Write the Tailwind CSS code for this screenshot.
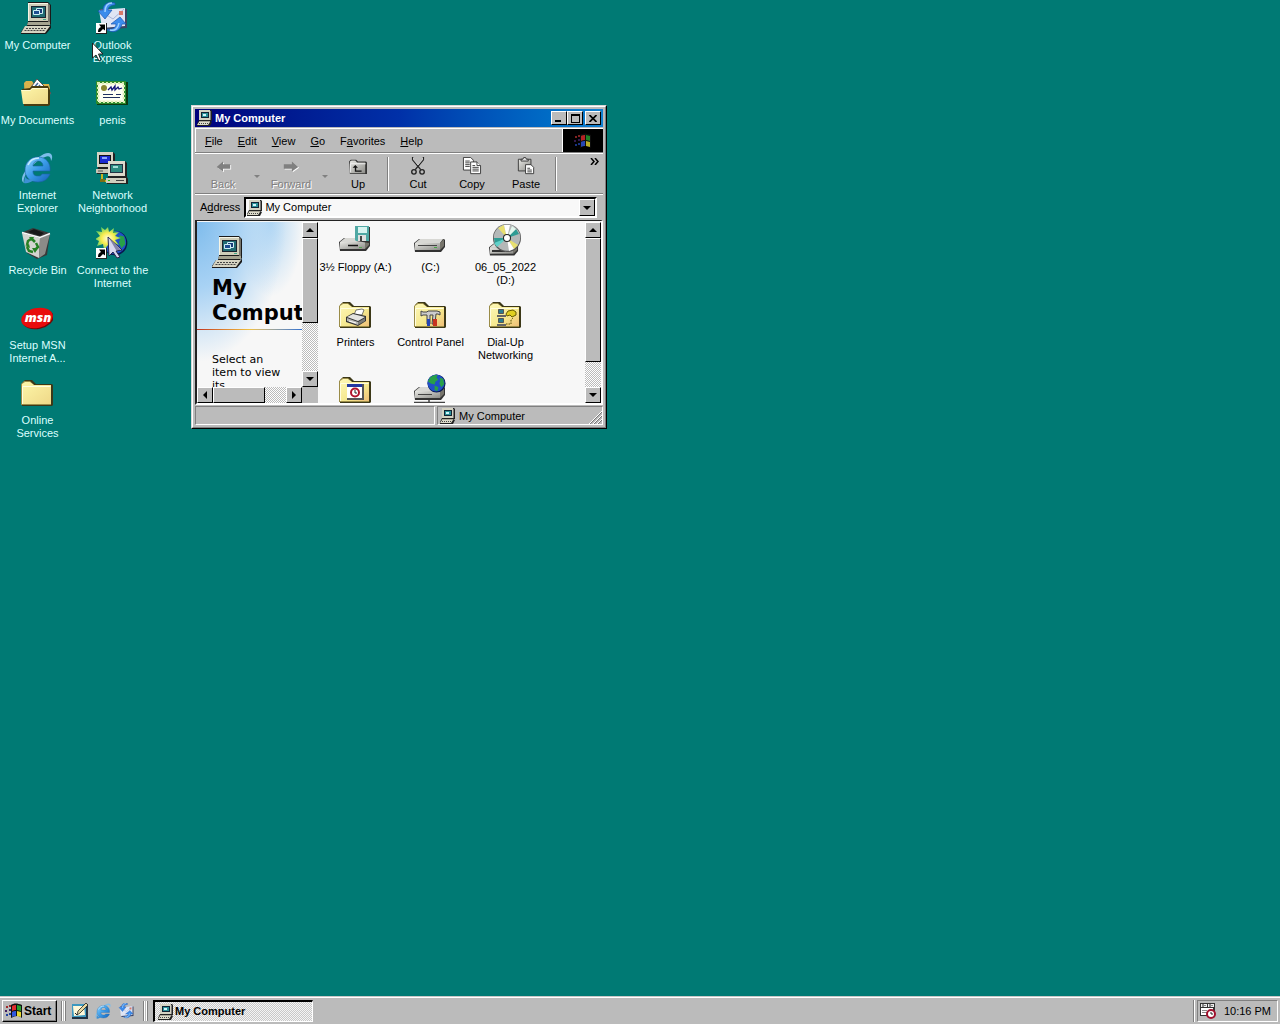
<!DOCTYPE html>
<html lang="en">
<head>
<meta charset="utf-8">
<title>Desktop</title>
<script src="https://cdn.jsdelivr.net/npm/@tailwindcss/browser@4"></script>
</head>
<body class="font-['Liberation_Sans',Arial,sans-serif] text-[11px] leading-[13px] text-black">

<!-- Shared icon symbols -->
<svg class="absolute size-0" aria-hidden="true">
  <defs>
    <linearGradient id="silver" x1="0" y1="0" x2="1" y2="1"><stop offset="0" stop-color="#e8e8e4"/><stop offset="1" stop-color="#8c8c88"/></linearGradient>
    <linearGradient id="yellow" x1="0" y1="0" x2="1" y2="1"><stop offset="0" stop-color="#fdf8b8"/><stop offset=".6" stop-color="#f5e78c"/><stop offset="1" stop-color="#efbf78"/></linearGradient>
    <linearGradient id="plain-yellow" x1="0" y1="0" x2="1" y2="1"><stop offset="0" stop-color="#fdf6a8"/><stop offset="1" stop-color="#efd888"/></linearGradient>
    <linearGradient id="ieblue" x1="0" y1="0" x2="1" y2="1"><stop offset="0" stop-color="#8fd4ff"/><stop offset=".5" stop-color="#3a9be8"/><stop offset="1" stop-color="#1560b8"/></linearGradient>
    <radialGradient id="burst"><stop offset="0" stop-color="#fffde0"/><stop offset=".5" stop-color="#f8ec50"/><stop offset="1" stop-color="#6cd060"/></radialGradient>

    <symbol id="computer" viewBox="0 0 32 32">
      <path d="M7 0h20l3 3v19l-2 2H6l1-4z" fill="#1a1a1a"/>
      <path d="M27 1l2 2v17l-2 1z" fill="#77756c"/>
      <path d="M7 1h20v18H7z" fill="#cfcdb9"/>
      <path d="M7 1h20v1H8v17H7z" fill="#f6f5e6"/>
      <path d="M10 4h15v12H10z" fill="#1c2430"/>
      <path d="M11 5h13v10H11z" fill="#1f6a72"/>
      <path d="M15.500 6.500h6v5h-6z" fill="#183c78" stroke="#cfeef6"/>
      <path d="M12.500 8.500h6v4h-6z" fill="#1c4d90" stroke="#cfeef6"/>
      <path d="M22 17h3v1h-3z" fill="#4a8"/>
      <path d="M7 20h22v3H6z" fill="#a5a390"/>
      <path d="M4 24h25l1-2v4l-5 6H0v-2z" fill="#1a1a1a"/>
      <path d="M4 24h25l-5 7H0z" fill="#d6d4c2"/>
      <path d="M5 26.500h20M3.500 28.500h20" stroke="#444" stroke-width="1" stroke-dasharray="2 1"/>
    </symbol>

    <symbol id="computer-sm" viewBox="0 0 16 16">
      <path d="M2 0h12l1 1v10h-2l2 1-2 4H0v-2l2-4z" fill="#222"/>
      <path d="M2 0h11v10H2z" fill="#d4d2c2"/><path d="M13 1h1v9h-1z" fill="#777"/>
      <path d="M4 2h8v6H4z" fill="#123"/><path d="M5 3h6v4H5z" fill="#2a9098"/><path d="M6 4h3v2H6z" fill="#d0f4fa"/>
      <path d="M2 11h11v1H2z" fill="#a8a698"/><path d="M2 12h11l-2 3H0z" fill="#dcdaca"/>
      <path d="M2 13.500h9" stroke="#444" stroke-dasharray="1 1"/>
    </symbol>

    <symbol id="folder-back" viewBox="0 0 32 32">
      <path d="M1 6l3-3h7l4 4h16l1 1v20l-1 1H1z" fill="#3c3818"/>
      <path d="M0 28V7l3-3h6l4 4h17v20z" fill="#9a8c48"/>
    </symbol>
    <symbol id="folder" viewBox="0 0 32 32">
      <use href="#folder-back"/>
      <path d="M1 27V7l3-2h5l4 3h17v19z" fill="url(#yellow)"/>
      <path d="M1.500 27V9.500h28" fill="none" stroke="#fffde0"/>
    </symbol>
    <symbol id="folder-plain" viewBox="0 0 32 32">
      <use href="#folder-back"/>
      <path d="M1 27V7l3-2h5l4 3h17v19z" fill="url(#plain-yellow)"/>
      <path d="M1.500 27V9.500h28" fill="none" stroke="#fffde0"/>
    </symbol>

    <symbol id="folder-docs" viewBox="0 0 32 32">
      <path d="M3 6l2-2h6l2 3h15l1 4v16H4z" fill="#d9b24c"/>
      <path d="M8 13L16 2l14 14-5 6z" fill="#fff" stroke="#555"/>
      <path d="M12 12l5-6M15 13l4-5M18 14l3-4M21 15l2-3" stroke="#46689c" stroke-width="1.500"/>
      <path d="M1 12l8-1 2-2h16l2 4v15l-2 1H3z" fill="#4a3c10"/>
      <path d="M0 13h9l2-2h16v16H2z" fill="url(#plain-yellow)"/>
      <path d="M.500 13.500h9l2-2h15" fill="none" stroke="#fffbd0"/>
    </symbol>

    <symbol id="ie" viewBox="0 0 32 32">
      <path d="M3 31c-4-2-2-9 5-17S26-2 30 2c2 2 1 5 0 7 0-4-2-6-6-4C18 7 10 14 6 20c-3 5-4 9-3 11z" fill="#7cbdea"/>
      <path fill-rule="evenodd" d="M17 5C9 5 4 11 4 18s5 12 13 12c6 0 10-3 12-8h-8c-1 2-2 2-4 2-4 0-5-2-5-5h17C30 11 25 5 17 5zM12 14c0-3 2-5 5-5s5 2 5 5z" fill="url(#ieblue)" stroke="#1c62a8" stroke-width=".600"/>
      <path d="M7 13c2-5 6-7 11-7" fill="none" stroke="#c6eaff" stroke-width="1.500"/>
      <path d="M3 31c3 1 7-1 10-3l-3-1c-3 1-5 0-6-3z" fill="#3d90d4"/>
    </symbol>

    <symbol id="bin" viewBox="0 0 32 32">
      <path d="M2 5l10-4 17 5-3 22-10 4-10-6z" fill="#383838"/>
      <path d="M7 5l6-3 10 4-4 3z" fill="#181818"/>
      <path d="M1 6l18 5-1 20L5 25z" fill="#d4d4d0"/>
      <path d="M19 11l10-4-5 20-6 4z" fill="#8b8b88"/>
      <path d="M1 5.500l18 5 10-4" fill="none" stroke="#f8f8f8" stroke-width="1.500"/>
      <path d="M6 18l1-4 3-2M10 11l4 4M15 16l2 4-3 3M6 20l2 4 4 1" fill="none" stroke="#268024" stroke-width="2.500"/>
      <path d="M8 10l5 0-2 4zM17 21l-6 0 3 5zM4 19l4-2 1 4z" fill="#268024"/>
    </symbol>

    <symbol id="shortcut" viewBox="0 0 11 11">
      <path d="M0 0h11v11H0z" fill="#222"/><path d="M0 0h10v10H0z" fill="#fff"/>
      <path d="M3 1.500h6v6L7 6 4 9H2c0-3 1-4 3-5z" fill="#000"/>
    </symbol>

    <symbol id="outlook" viewBox="0 0 32 32">
      <path d="M4 7h27v19l-24 2z" fill="#3c4464"/>
      <path d="M3 8l26-2v18L6 26z" fill="#dfe5f4"/>
      <path d="M4 9l13 8L28 7" fill="none" stroke="#a7b4d8"/>
      <path d="M23 9h4v4h-4z" fill="#d87868"/>
      <path d="M19 1C12-1 7 2 7 8L2 9l7 8 7-9-4 0c0-3 3-5 7-5z" fill="#3c8cec" stroke="#1d58b0" stroke-width=".700"/>
      <path d="M10 27c6 5 14 3 16-5h4L24 15l-9 7h5c0 4-4 6-10 5z" fill="#3c8cec" stroke="#1d58b0" stroke-width=".700"/>
      <path d="M16 1c-4 0-7 3-7 9M14 28c5 1 8-1 9-7" fill="none" stroke="#9cd0ff" stroke-width="1.500"/>
    </symbol>

    <symbol id="certificate" viewBox="0 0 32 32">
      <path d="M1 5h31v23H1z" fill="#0a3a10"/>
      <path d="M0 4h30v23H0z" fill="#2f8b2c"/>
      <path d="M2 6h26v19H2z" fill="#f9f9df" stroke="#d4ecb0" stroke-width="2" stroke-dasharray="2 2"/>
      <path d="M4 8h22v15H4z" fill="#fffff4"/>
      <circle cx="8" cy="11" r="3" fill="#8b8730"/>
      <path d="M12 13l3-3 1 3 3-4 0 4 3-3 1 2 3-1" fill="none" stroke="#141478" stroke-width="1.300"/>
      <path d="M7 17.500h10M7 20.500h17M20 17.500h5" stroke="#203060"/>
    </symbol>

    <symbol id="network" viewBox="0 0 32 32">
      <path d="M1 0h16l2 2v15l1 2v3H1v-4l1-2z" fill="#222"/>
      <path d="M1 0h16v15H1z" fill="#d4d2c4"/><path d="M3 3h12v9H3z" fill="#111"/><path d="M4 4h10v7H4z" fill="#1a2ad0"/><path d="M6 5h5v2H6z" fill="#8ba4ff"/>
      <path d="M0 17h18v4H0z" fill="#c8c6b6"/><path d="M2 19h5" stroke="#555"/>
      <path d="M6 22v7h8" fill="none" stroke="#c9b220" stroke-width="2"/><path d="M4 27h5v3H4z" fill="#7b7016"/>
      <path d="M12 9h17l2 2v14l1 2v5H11v-5l1-2z" fill="#222"/>
      <path d="M12 9h17v15H12z" fill="#dcdacc"/><path d="M14 12h13v9H14z" fill="#234"/><path d="M15 13h11v7H15z" fill="#2d8a80"/><path d="M17 14h5v2h-5z" fill="#a4ded8"/>
      <path d="M10 26h20v5H10z" fill="#d0cebe"/><path d="M20 28.500h8" stroke="#444"/><path d="M12 28h2v1h-2z" fill="#2b2"/>
    </symbol>

    <symbol id="globe" viewBox="0 0 20 20">
      <circle cx="10" cy="10" r="9.500" fill="#081850"/><circle cx="9.500" cy="9.500" r="9" fill="#2050c8"/>
      <path d="M3 4c3-3 6-3 8-3l-1 3 2 2-3 2-1 3-4-1-3-2zM13 4l4 1 1 6-3 3-2-4 1-3zM8 12l4 2-1 4-3-1z" fill="#28a048"/>
    </symbol>

    <symbol id="connect" viewBox="0 0 32 32">
      <svg x="6" y="1" width="26" height="30"><use href="#globe"/></svg>
      <path d="M12 0l1 5 5-4-1 5 6-1-4 4 6 2-6 2 4 5-6-2-1 6-4-4-4 5-1-6-6 2 2-5-4-2 5-3-4-5 6 1-1-5 4 3z" fill="url(#burst)"/>
      <path d="M12 10l14 13-6 1 4 6-3 1-4-6-4 4z" fill="#d7d7ee" stroke="#26264c"/>
      <path d="M13 11l12 12-5 0z" fill="#8484ac"/>
    </symbol>

    <symbol id="msn" viewBox="0 0 32 32">
      <ellipse cx="17" cy="17" rx="16" ry="10" fill="#700808" transform="rotate(-12 17 17)"/>
      <ellipse cx="16" cy="16" rx="16" ry="10" fill="#e80c0c" transform="rotate(-12 16 16)"/>
      <text x="17" y="20" text-anchor="middle" font-family="Open Sans, sans-serif" font-size="13" font-weight="800" font-style="italic" fill="#fff">msn</text>
    </symbol>

    <symbol id="drive" viewBox="0 0 32 14">
      <path d="M0 5l5-4h25l1 1v7l-4 5H1z" fill="#333"/>
      <path d="M1 5l5-4h23l-3 4z" fill="#d8d8d4"/><path d="M26 5l4-4v7l-4 4z" fill="#77756c"/>
      <path d="M1 5h25v7H1z" fill="url(#silver)"/>
    </symbol>

    <symbol id="floppy-drive" viewBox="0 0 32 32">
      <svg x="0" y="13" width="32" height="14"><use href="#drive"/></svg>
      <path d="M9 21.500h10" stroke="#111" stroke-width="1.500"/><path d="M20 23h3v1h-3z" fill="#5a5"/>
      <path d="M17 3h14v16h-1l-13-2z" fill="#333"/><path d="M16 2h14v15H17l-1-1z" fill="#50a8a4"/><path d="M19 3h9v6h-9z" fill="#d8f4f0"/><path d="M19 11h8v6h-8z" fill="#e0e0e0"/><path d="M21 12h2v5h-2z" fill="#444"/>
    </symbol>
    <symbol id="hard-drive" viewBox="0 0 32 32">
      <svg x="0" y="14" width="32" height="14"><use href="#drive"/></svg>
      <path d="M4 21.500h19" stroke="#444"/><path d="M20 23.500h3" stroke="#4a4"/>
    </symbol>
    <symbol id="cd-drive" viewBox="0 0 32 32">
      <svg x="0" y="18" width="30" height="14"><use href="#drive"/></svg>
      <path d="M3 26h13v2H3z" fill="#333"/>
      <circle cx="18" cy="14" r="14" fill="#555"/><circle cx="18" cy="13.500" r="13.200" fill="#b4b8b8"/>
      <path d="M18 14L9 4l6-3zM18 14l7 11 4-4z" fill="#e8e070"/><path d="M18 14L15 1h6zM18 14l2 13 5-2z" fill="#fff"/>
      <path d="M18 14l9-9 3 5zM18 14L6 20l-1-6z" fill="#2e9c94"/><path d="M18 14L23 2l4 3z" fill="#e4f8ee"/><path d="M18 14L8 23l-3-4z" fill="#60d0c8"/>
      <circle cx="18" cy="14" r="4" fill="#222"/><circle cx="18" cy="14" r="3" fill="#fff"/>
    </symbol>
    <symbol id="printers" viewBox="0 0 32 32">
      <use href="#folder"/>
      <path d="M15 16l2-5 6-1 2 1-2 5z" fill="#fff" stroke="#555" stroke-width=".800"/>
      <path d="M7 18l7-4 13 3v5l-8 5-12-4z" fill="#333"/><path d="M8 18l6-3 12 3-7 4z" fill="#e4e4e0"/><path d="M8 19l11 4v3L8 22z" fill="#b8b8b4"/><path d="M19 23l7-4v3l-7 4z" fill="#7c7c78"/><path d="M10 22l7 2" stroke="#fff"/>
    </symbol>
    <symbol id="control-panel" viewBox="0 0 32 32">
      <use href="#folder"/>
      <path d="M7 12l2 1h4l1-1h9l3 1v3l-2-1h-2l-1 10h-3l1-9h-3v9h-3v-9H9l-2 1z" fill="#ccc" stroke="#444"/>
      <path d="M13 20h3v7h-3z" fill="#2444b4"/><path d="M19 20h4v7h-4z" fill="#c83420"/>
    </symbol>
    <symbol id="dialup" viewBox="0 0 32 32">
      <use href="#folder"/>
      <path d="M9.500 10.500h5v4h-5zM9.500 19.500h5v4h-5z" fill="#2a7c90" stroke="#555"/><path d="M8 16h9v2H8zM8 25h9v2H8z" fill="#666"/>
      <path d="M17 15l2-3 5-1 3 2v3l-4 2-2-2-3 1z" fill="#e0d020" stroke="#665c00"/><path d="M17 25h5v-4l2-2" fill="none" stroke="#554e00" stroke-dasharray="1.500 1"/>
    </symbol>
    <symbol id="scheduled" viewBox="0 0 32 32">
      <use href="#folder"/>
      <path d="M8 10h17v16H8z" fill="#555"/><path d="M8 10h15v14H8z" fill="#fff"/><path d="M8 10h15v3H8z" fill="#2338a0"/>
      <circle cx="16" cy="18.500" r="4" fill="#fff" stroke="#b0142c" stroke-width="2"/><path d="M16 16v3h2" stroke="#222" fill="none"/>
    </symbol>
    <symbol id="web-folders" viewBox="0 0 32 32">
      <svg x="0" y="12" width="32" height="14"><use href="#drive"/></svg>
      <path d="M4 20.500h14" stroke="#444"/><path d="M0 28.500h31M15 26v6" stroke="#444" stroke-width="1.500"/>
      <svg x="13" y="0" width="19" height="19"><use href="#globe"/></svg>
    </symbol>

    <symbol id="flag" viewBox="0 0 18 16">
      <path d="M1 3h2v2H1zM4 2h2v2H4z" fill="#a02c2c"/><path d="M0 7h2v2H0zM4 6h2v2H4z" fill="#402060"/><path d="M1 11h2v2H1zM4 10h2v2H4z" fill="#2040a0"/>
      <path d="M6 2c3-2 6-2 11 0v13c-4-3-7-2-11 0z" fill="#111"/>
      <path d="M7 3c1-1 3-1 4-1v5c-1 0-3 0-4 1z" fill="#e02c2c"/><path d="M12 2l4 1v5l-4-1z" fill="#28a030"/>
      <path d="M7 9c1-1 3-1 4-1v5c-1 0-3 0-4 1z" fill="#3058e0"/><path d="M12 8l4 1v5l-4-1z" fill="#e8d830"/>
    </symbol>

    <symbol id="up" viewBox="0 0 8 4"><path d="M4 0l4 4H0z"/></symbol>
    <symbol id="down" viewBox="0 0 8 4"><path d="M0 0h8L4 4z"/></symbol>
    <symbol id="left" viewBox="0 0 4 8"><path d="M4 0v8L0 4z"/></symbol>
    <symbol id="right" viewBox="0 0 4 8"><path d="M0 0l4 4-4 4z"/></symbol>
  </defs>
</svg>

<div class="relative flex h-screen w-full flex-col overflow-hidden bg-[#007a74]">

  <!-- Desktop icons -->
  <main class="grow pt-[2px]">
    <ul class="grid w-max auto-cols-[75px] grid-flow-col grid-rows-[repeat(6,75px)] text-center text-[#dcffff]">
      <li><a href="#" class="flex flex-col items-center gap-[5px]"><svg class="mr-px size-8"><use href="#computer"/></svg>My Computer</a></li>
      <li><a href="#" class="flex flex-col items-center gap-[5px] whitespace-nowrap"><svg class="mr-px size-8"><use href="#folder-docs"/></svg>My Documents</a></li>
      <li><a href="#" class="flex flex-col items-center gap-[5px]"><svg class="mr-px size-8"><use href="#ie"/></svg><span>Internet<br>Explorer</span></a></li>
      <li><a href="#" class="flex flex-col items-center gap-[5px]"><svg class="mr-px size-8"><use href="#bin"/></svg>Recycle Bin</a></li>
      <li><a href="#" class="flex flex-col items-center gap-[5px]"><svg class="mr-px size-8"><use href="#msn"/></svg><span>Setup MSN<br>Internet A...</span></a></li>
      <li><a href="#" class="flex flex-col items-center gap-[5px]"><svg class="mr-px size-8"><use href="#folder-plain"/></svg><span>Online<br>Services</span></a></li>
      <li><a href="#" class="flex flex-col items-center gap-[5px]"><svg class="mr-px size-8"><use href="#outlook"/><use href="#shortcut" x="0" y="21" width="11" height="11"/></svg><span>Outlook<br>Express</span></a></li>
      <li><a href="#" class="flex flex-col items-center gap-[5px]"><svg class="mr-px size-8"><use href="#certificate"/></svg>penis</a></li>
      <li><a href="#" class="flex flex-col items-center gap-[5px]"><svg class="mr-px size-8"><use href="#network"/></svg><span>Network<br>Neighborhood</span></a></li>
      <li><a href="#" class="flex flex-col items-center gap-[5px]"><svg class="mr-px size-8"><use href="#connect"/><use href="#shortcut" x="0" y="21" width="11" height="11"/></svg><span class="whitespace-nowrap">Connect to the<br>Internet</span></a></li>
    </ul>
  </main>

  <!-- My Computer window -->
  <section class="absolute left-[191px] top-[105px] flex h-[324px] w-[416px] flex-col border border-[#d8d8d8] border-r-black border-b-black bg-[#bbbbbb]">
    <div class="flex min-h-0 grow flex-col border border-white border-r-[#808080] border-b-[#808080] p-[2px]">
      <header class="flex h-[18px] shrink-0 items-center gap-[2px] bg-linear-to-r from-[#00007c] via-[#0030a8] to-[#1080d0] px-[2px] text-white">
        <svg class="size-4"><use href="#computer-sm"/></svg>
        <h1 class="grow font-bold">My Computer</h1>
        <div class="flex">
          <button aria-label="Minimize" class="flex h-[14px] w-4 items-end border border-white border-r-black border-b-black bg-[#bbbbbb] pb-[2px] pl-[3px]"><span class="h-[2px] w-[6px] bg-black"></span></button>
          <button aria-label="Maximize" class="mr-[2px] flex h-[14px] w-4 items-center justify-center border border-white border-r-black border-b-black bg-[#bbbbbb]"><span class="h-[9px] w-[9px] border border-t-2 border-black"></span></button>
          <button aria-label="Close" class="flex h-[14px] w-4 items-center justify-center border border-white border-r-black border-b-black bg-[#bbbbbb]"><svg class="h-[7px] w-2" viewBox="0 0 8 7"><path d="M.500 0l7 7M7.500 0l-7 7" stroke="#000" stroke-width="1.700"/></svg></button>
        </div>
      </header>

      <div class="mt-px flex h-[25px] shrink-0 border-t border-b border-t-white border-b-[#808080]">
        <nav class="flex grow items-center gap-[15px] border-r border-l border-white pt-px pl-[9px]">
          <a href="#"><u>F</u>ile</a><a href="#"><u>E</u>dit</a><a href="#"><u>V</u>iew</a><a href="#"><u>G</u>o</a><a href="#">F<u>a</u>vorites</a><a href="#"><u>H</u>elp</a>
        </nav>
        <div class="flex w-10 items-center justify-center bg-black"><svg class="h-4 w-[18px] opacity-80"><use href="#flag"/></svg></div>
      </div>

      <div class="flex h-[41px] shrink-0 border-t border-b border-white border-b-[#808080] pt-[3px] pb-[2px] pl-px">
        <button class="flex w-[54px] flex-col items-center gap-[3px] text-[#808080] [text-shadow:1px_1px_#fff]"><svg class="h-5 w-5" viewBox="0 0 20 20"><path d="M4 12l7-6v3h8v5h-8v3z" fill="#fff"/><path d="M3 11l7-6v3h8v5h-8v3z" fill="#808080"/></svg>Back</button>
        <button aria-label="Back history" class="flex w-[14px] items-center justify-center pt-1"><svg class="h-[3px] w-[6px] fill-[#808080]"><use href="#down"/></svg></button>
        <button class="flex w-[54px] flex-col items-center gap-[3px] text-[#808080] [text-shadow:1px_1px_#fff]"><svg class="h-5 w-5" viewBox="0 0 20 20"><path d="M19 12l-7-6v3H3v5h9v3z" fill="#fff"/><path d="M18 11l-7-6v3H2v5h9v3z" fill="#808080"/></svg>Forward</button>
        <button aria-label="Forward history" class="flex w-[13px] items-center justify-center pt-1"><svg class="h-[3px] w-[6px] fill-[#808080]"><use href="#down"/></svg></button>
        <button class="flex w-[54px] flex-col items-center gap-[3px]"><svg class="h-5 w-5" viewBox="0 0 20 20"><path d="M0 5l2-2h6l2 2h9l1 1v13H1z" fill="#333"/><path d="M1 5l2-1h4l2 2h9v12H1z" fill="url(#silver)"/><path d="M1.500 17V7.500h17" fill="none" stroke="#f4f4f4"/><path d="M7 9l3 3H8v3h6v1.500H6.500V12H4z" fill="#111"/></svg>Up</button>
        <span class="mx-[2px] w-[2px] border-l border-l-[#808080] bg-white"></span>
        <button class="flex w-[54px] flex-col items-center gap-[3px]"><svg class="h-5 w-5" viewBox="0 0 20 20" fill="none" stroke="#222"><path d="M4 0v3l9 11M16 0v3L7 14" stroke-width="1.500"/><path d="M5 1v2l5 6M15 1v2l-5 6" stroke="#eee" stroke-width=".700"/><circle cx="5.500" cy="16.500" r="2.500" stroke-width="1.500"/><circle cx="14.500" cy="16.500" r="2.500" stroke-width="1.500"/></svg>Cut</button>
        <button class="flex w-[54px] flex-col items-center gap-[3px]"><svg class="h-5 w-5" viewBox="0 0 20 20" fill="#fff" stroke="#333"><path d="M.500.500h8l3 3v11H.500z"/><path d="M2.500 4.500h5M2.500 6.500h5M2.500 8.500h5M2.500 10.500h5"/><path d="M8.500 5.500h7l4 4v9h-11z"/><path d="M15.500 5.500v4h4M10.500 9.500h3M10.500 11.500h7M10.500 13.500h7M10.500 15.500h7"/></svg>Copy</button>
        <button class="flex w-[54px] flex-col items-center gap-[3px]"><svg class="h-5 w-5" viewBox="0 0 20 20" stroke="#333"><path d="M1.500 2.500h14v13h-14z" fill="url(#silver)"/><path d="M4.500 4.500v-2h2l1-2h2l1 2h2v2z" fill="#ddd"/><path d="M9.500 8.500h6l3 3v7h-9z" fill="#fff"/><path d="M11.500 12.500h3M11.500 14.500h5M11.500 16.500h5"/></svg>Paste</button>
        <span class="mx-[2px] w-[2px] border-l border-l-[#808080] bg-white"></span>
        <button aria-label="More" class="ml-auto flex items-start pt-px pr-[4px]"><svg class="h-[7px] w-[9px]" viewBox="0 0 9 7"><path d="M1 0l3 3.500L1 7M5 0l3 3.500L5 7" fill="none" stroke="#000" stroke-width="1.500"/></svg></button>
      </div>

      <div class="flex h-[26px] shrink-0 items-center gap-1 border-t border-white pr-[6px] pl-[5px]">
        <label for="addr">A<u>d</u>dress</label>
        <div class="flex h-[21px] grow items-center gap-[2px] border-2 border-black border-r-white border-b-white bg-[#f8f8f8] pl-px">
          <svg class="size-4"><use href="#computer-sm"/></svg>
          <select id="addr" class="grow appearance-none bg-transparent"><option>My Computer</option></select>
          <button aria-label="Open address list" class="flex h-[17px] w-4 items-center justify-center border border-white border-r-black border-b-black bg-[#bbbbbb]"><svg class="h-1 w-2"><use href="#down"/></svg></button>
        </div>
      </div>

      <div class="flex min-h-0 grow border-2 border-t border-t-[#222] border-r-white border-b-white border-l-[#222] bg-[#f7f7f7] pt-px">
        <aside class="grid w-[121px] shrink-0 grid-cols-[minmax(0,1fr)_16px] grid-rows-[minmax(0,1fr)_16px]">
          <div class="overflow-hidden bg-[radial-gradient(ellipse_at_0%_0%,#7fbcec_0%,#a8d2f4_28%,#f7f7f700_60%),radial-gradient(ellipse_at_70%_0%,#b4d8f4_0%,#f7f7f700_32%)]">
            <div class="h-[107px] overflow-hidden pt-[14px] pl-[15px]">
              <svg class="size-8"><use href="#computer"/></svg>
              <h2 class="pt-2 font-['DejaVu_Sans',Verdana,sans-serif] text-[21px] leading-[25px] font-bold">My Computer</h2>
            </div>
            <div class="h-px bg-linear-to-r from-[#c03020] via-[#f0c040] to-[#3070d0]"></div>
            <p class="w-[90px] pt-[23px] pl-[15px] font-['DejaVu_Sans',Verdana,sans-serif]">Select an item to view its description.</p>
          </div>
          <div class="flex flex-col bg-[conic-gradient(#fff_25%,#bbb_0_50%,#fff_0_75%,#bbb_0)] bg-[length:2px_2px]">
            <button aria-label="Scroll up" class="flex h-4 shrink-0 items-center justify-center border border-white border-r-black border-b-black bg-[#bbbbbb]"><svg class="h-1 w-2"><use href="#up"/></svg></button>
            <div class="h-[85px] border border-white border-r-black border-b-black bg-[#bbbbbb]"></div>
            <button aria-label="Scroll down" class="mt-auto flex h-4 shrink-0 items-center justify-center border border-white border-r-black border-b-black bg-[#bbbbbb]"><svg class="h-1 w-2"><use href="#down"/></svg></button>
          </div>
          <div class="flex bg-[conic-gradient(#fff_25%,#bbb_0_50%,#fff_0_75%,#bbb_0)] bg-[length:2px_2px]">
            <button aria-label="Scroll left" class="flex w-4 shrink-0 items-center justify-center border border-white border-r-black border-b-black bg-[#bbbbbb]"><svg class="h-2 w-1"><use href="#left"/></svg></button>
            <div class="w-[52px] border border-white border-r-black border-b-black bg-[#bbbbbb]"></div>
            <button aria-label="Scroll right" class="ml-auto flex w-4 shrink-0 items-center justify-center border border-white border-r-black border-b-black bg-[#bbbbbb]"><svg class="h-2 w-1"><use href="#right"/></svg></button>
          </div>
          <div class="bg-[#bbbbbb]"></div>
        </aside>

        <ul class="grid min-w-0 grow grid-cols-[repeat(3,75px)] content-start auto-rows-[75px] overflow-hidden pt-[2px] text-center whitespace-nowrap">
          <li><a href="#" class="flex flex-col items-center gap-[5px]"><svg class="mr-[2px] size-8"><use href="#floppy-drive"/></svg>3½ Floppy (A:)</a></li>
          <li><a href="#" class="flex flex-col items-center gap-[5px]"><svg class="mr-[2px] size-8"><use href="#hard-drive"/></svg>(C:)</a></li>
          <li><a href="#" class="flex flex-col items-center gap-[5px]"><svg class="mr-[2px] size-8"><use href="#cd-drive"/></svg><span>06_05_2022<br>(D:)</span></a></li>
          <li><a href="#" class="flex flex-col items-center gap-[5px]"><svg class="mr-[2px] size-8"><use href="#printers"/></svg>Printers</a></li>
          <li><a href="#" class="flex flex-col items-center gap-[5px]"><svg class="mr-[2px] size-8"><use href="#control-panel"/></svg>Control Panel</a></li>
          <li><a href="#" class="flex flex-col items-center gap-[5px]"><svg class="mr-[2px] size-8"><use href="#dialup"/></svg><span>Dial-Up<br>Networking</span></a></li>
          <li><a href="#" aria-label="Scheduled Tasks" class="flex flex-col items-center"><svg class="mr-[2px] size-8"><use href="#scheduled"/></svg></a></li>
          <li><a href="#" aria-label="Web Folders" class="flex flex-col items-center"><svg class="mr-[2px] size-8"><use href="#web-folders"/></svg></a></li>
        </ul>

        <div class="flex w-4 shrink-0 flex-col bg-[conic-gradient(#fff_25%,#bbb_0_50%,#fff_0_75%,#bbb_0)] bg-[length:2px_2px]">
          <button aria-label="Scroll up" class="flex h-4 shrink-0 items-center justify-center border border-white border-r-black border-b-black bg-[#bbbbbb]"><svg class="h-1 w-2"><use href="#up"/></svg></button>
          <div class="h-[124px] border border-white border-r-black border-b-black bg-[#bbbbbb]"></div>
          <button aria-label="Scroll down" class="mt-auto flex h-4 shrink-0 items-center justify-center border border-white border-r-black border-b-black bg-[#bbbbbb]"><svg class="h-1 w-2"><use href="#down"/></svg></button>
        </div>
      </div>

      <footer class="flex h-[20px] shrink-0 gap-[2px] pt-px">
        <div class="w-[240px] border border-[#808080] border-r-white border-b-white"></div>
        <div class="flex grow items-center gap-[3px] border border-[#808080] border-r-white border-b-white pt-px pl-[2px]">
          <svg class="size-4"><use href="#computer-sm"/></svg><span class="grow">My Computer</span>
          <svg class="size-[14px] self-end" viewBox="0 0 14 14"><path d="M1 14L14 1M5 14l9-9M9 14l5-5" stroke="#fff"/><path d="M2 14L14 2M6 14l8-8M10 14l4-4" stroke="#777"/></svg>
        </div>
      </footer>
    </div>
  </section>

  <!-- Mouse pointer -->
  <svg class="pointer-events-none absolute left-[92px] top-[42px] h-[20px] w-3" viewBox="0 0 12 20"><path d="M.500 1v15L4 13l3 6 2-1-2.500-6H11z" fill="#fff" stroke="#222"/></svg>

  <!-- Taskbar -->
  <footer class="flex h-[28px] shrink-0 items-center border-t border-[#c8c8c8] bg-[#bbbbbb]">
    <div class="flex h-full w-full items-center border-t border-white pr-[2px] pl-[2px]">
      <button class="flex h-[22px] w-[55px] items-center gap-px border border-white border-r-black border-b-black pl-[2px] text-[12px] font-bold shadow-[inset_-1px_-1px_#808080]"><svg class="h-4 w-[18px]"><use href="#flag"/></svg>Start</button>
      <span class="ml-1 h-5 w-px bg-[#808080]"></span><span class="h-5 w-px bg-white"></span><span class="ml-px h-5 w-[2px] border-l border-white bg-[#808080]"></span>
      <div class="ml-[6px] flex gap-[7px]">
        <button aria-label="Show Desktop"><svg class="block size-4" viewBox="0 0 16 16"><path d="M0 1h16v15H0z" fill="#234"/><path d="M0 1h14v13H0z" fill="#3c98c0"/><path d="M1 3h11l1 9-11 1z" fill="#fff8d8"/><path d="M5 12l1-4 8-8 2 2-8 8z" fill="#e8d8a0" stroke="#222" stroke-width=".800"/><path d="M3 10l2 2" stroke="#222"/></svg></button>
        <button aria-label="Internet Explorer"><svg class="block size-4"><use href="#ie"/></svg></button>
        <button aria-label="Outlook Express"><svg class="block size-4"><use href="#outlook"/></svg></button>
      </div>
      <span class="ml-[9px] h-5 w-px bg-[#808080]"></span><span class="h-5 w-px bg-white"></span><span class="ml-px h-5 w-[2px] border-l border-white bg-[#808080]"></span>
      <button class="ml-[5px] flex h-[22px] w-[160px] items-center gap-px border-t-2 border-r border-b border-l-2 border-black border-r-white border-b-white bg-[conic-gradient(#f4f4f4_25%,#c8c8c8_0_50%,#f4f4f4_0_75%,#c8c8c8_0)] bg-[length:2px_2px] pl-[3px] font-bold"><svg class="size-4"><use href="#computer-sm"/></svg>My Computer</button>
      <span class="ml-auto mr-[2px] h-[22px] w-[2px] border-l border-[#808080] bg-white"></span>
      <div class="flex h-[22px] items-center gap-2 border border-[#808080] border-r-white border-b-white pr-[6px] pl-[2px]">
        <svg class="size-4" viewBox="0 0 16 16"><path d="M0 0h15v13H0z" fill="#333"/><path d="M1 5h12v7H1z" fill="#fff"/><path d="M1 1h6v3H1zM8 1h6v3H8z" fill="#eee"/><path d="M3 1v3M5 2v1M10 1v3M12 2v1" stroke="#222"/><path d="M2 7.500h5M2 9.500h5" stroke="#888"/><circle cx="11" cy="11" r="4" fill="#fff" stroke="#a0102c" stroke-width="2"/><path d="M11 9v2h2" fill="none" stroke="#222"/></svg>
        <time>10:16 PM</time>
      </div>
    </div>
  </footer>
</div>
</body>
</html>
